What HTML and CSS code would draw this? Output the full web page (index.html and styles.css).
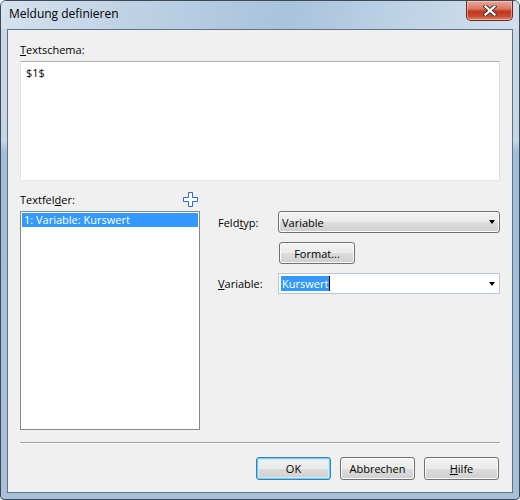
FILE: index.html
```html
<!DOCTYPE html>
<html lang="de">
<head>
  <meta charset="UTF-8" />
  <title>Meldung definieren</title>
  <link rel="stylesheet" href="styles.css">
</head>
<body>
  <div class="window">
    <div class="titlebar">
      <span class="title">Meldung definieren</span>
      <div class="close">
        <svg width="14" height="11" viewBox="0 0 14 11">
          <path d="M2.5 1.5 L11.5 9.5 M11.5 1.5 L2.5 9.5" stroke="#4a3a36" stroke-width="4.2" stroke-linecap="square" />
          <path d="M2.5 1.5 L11.5 9.5 M11.5 1.5 L2.5 9.5" stroke="#fff" stroke-width="2.2" stroke-linecap="square" />
        </svg>
      </div>
    </div>

    <div class="client">
      <div class="label"><u>T</u>extschema:</div>
      <div class="schema">$1$</div>

      <div class="fields">
        <div class="list-head">
          <span>Textfel<u>d</u>er:</span>
          <svg class="plus" width="15" height="15" viewBox="0 0 15 15">
            <path d="M5.5 0.5 H9.5 V5.5 H14.5 V9.5 H9.5 V14.5 H5.5 V9.5 H0.5 V5.5 H5.5 Z" fill="#fff" stroke="#2f66c8" stroke-width="1" />
          </svg>
        </div>
        <div></div>

        <div class="listbox">
          <div class="item selected">1: Variable: Kurswert</div>
        </div>

        <div class="props">
          <div class="row">
            <span class="prop-label">Feld<u>t</u>yp:</span>
            <div class="combo">
              <span>Variable</span>
              <span class="arrow"></span>
            </div>
          </div>
          <div class="row">
            <span class="prop-label"></span>
            <button class="btn format">Format...</button>
          </div>
          <div class="row">
            <span class="prop-label"><u>V</u>ariable:</span>
            <div class="combo edit">
              <span class="sel">Kurswert</span><span class="caret"></span>
              <span class="arrow"></span>
            </div>
          </div>
        </div>
      </div>

      <div class="separator"></div>

      <div class="buttons">
        <button class="btn default">OK</button>
        <button class="btn">Abbrechen</button>
        <button class="btn"><u>H</u>ilfe</button>
      </div>
    </div>
  </div>
</body>
</html>
```

FILE: styles.css
```css
* {
  margin: 0;
  padding: 0;
  box-sizing: border-box;
}

body {
  width: 520px;
  height: 500px;
  font-family: "Open Sans", sans-serif;
  font-size: 11px;
  color: #000;
  background: #fff;
}

.window {
  width: 520px;
  height: 500px;
  border: 1px solid #3d4a56;
  border-radius: 6px 6px 4px 4px;
  background: linear-gradient(180deg, #cbd9e7 0, #c5d6e6 140px, #a3bed8 150px, #a8c0d8 100%);
  display: flex;
  flex-direction: column;
  overflow: hidden;
}

.titlebar {
  height: 28px;
  display: flex;
  align-items: flex-start;
  background: linear-gradient(100deg, #d6e2ee 0%, #bed2e5 25%, #a8c3dc 55%, #c0d4e7 80%, #d0dfed 100%);
}

.title {
  padding: 5px 0 0 8px;
  font-size: 12px;
  line-height: 16px;
  color: #000;
}

.close {
  margin-left: auto;
  margin-right: 6px;
  width: 47px;
  height: 20px;
  border: 1px solid #6b2a1e;
  border-top: none;
  border-radius: 0 0 5px 5px;
  background: linear-gradient(180deg, #e8a899 0%, #db7a66 40%, #c2381f 55%, #c64a30 80%, #e08a70 100%);
  box-shadow: inset 0 0 0 1px rgba(255, 220, 210, 0.5);
  display: flex;
  align-items: center;
  justify-content: center;
}

.client {
  flex: 1;
  margin: 0 6px 6px;
  border: 1px solid #5f7384;
  background: #f0f0f0;
  padding: 12px 12px 0;
}

.label {
  line-height: 15px;
  margin-bottom: 4px;
}

.schema {
  height: 120px;
  background: #fff;
  border: 1px solid #e3e9ef;
  border-top-color: #abadb3;
  border-left-color: #e2e3ea;
  border-right-color: #dbdfe6;
  padding: 3px 5px;
  line-height: 15px;
}

.fields {
  margin-top: 11px;
  display: grid;
  grid-template-columns: 180px 1fr;
  column-gap: 18px;
}

.list-head {
  display: flex;
  justify-content: space-between;
  align-items: center;
  line-height: 15px;
  margin-bottom: 4px;
}

.plus {
  margin-right: 2px;
}

.listbox {
  height: 219px;
  background: #fff;
  border: 1px solid #828790;
  padding: 1px;
}

.item {
  height: 14px;
  line-height: 14px;
  padding-left: 2px;
}

.item.selected {
  background: #3399ff;
  color: #fff;
}

.props {
  display: flex;
  flex-direction: column;
  gap: 9px;
}

.row {
  display: flex;
  align-items: center;
}

.prop-label {
  width: 60px;
}

.combo {
  flex: 1;
  height: 22px;
  border: 1px solid #707070;
  border-radius: 3px;
  background: linear-gradient(180deg, #f2f2f2 0%, #ebebeb 50%, #dddddd 51%, #cfcfcf 100%);
  box-shadow: inset 0 0 0 1px #fbfbfb;
  display: flex;
  align-items: center;
  padding: 0 4px 0 3px;
}

.combo .arrow {
  margin-left: auto;
  width: 0;
  height: 0;
  border-left: 3.5px solid transparent;
  border-right: 3.5px solid transparent;
  border-top: 4px solid #000;
}

.combo.edit {
  height: 21px;
  border-radius: 0;
  border-color: #b9c8d8;
  background: #fff;
  box-shadow: none;
  padding-left: 2px;
}

.sel {
  background: #3399ff;
  color: #fff;
  line-height: 15px;
  padding: 0 1px;
}

.caret {
  width: 1px;
  height: 15px;
  background: #000;
}

.btn {
  font-family: inherit;
  font-size: 11px;
  color: #000;
  height: 22px;
  border: 1px solid #707070;
  border-radius: 3px;
  background: linear-gradient(180deg, #f2f2f2 0%, #ebebeb 50%, #dddddd 51%, #cfcfcf 100%);
  box-shadow: inset 0 0 0 1px #fbfbfb;
}

.btn.format {
  width: 76px;
  margin-left: 1px;
}

.separator {
  margin-top: 12px;
  border-top: 1px solid #a0a0a0;
  border-bottom: 1px solid #fff;
}

.buttons {
  margin-top: 13px;
  display: flex;
  justify-content: flex-end;
  gap: 9px;
  padding-right: 1px;
}

.buttons .btn {
  width: 75px;
  height: 23px;
}

.btn.default {
  border-color: #3c7fb1;
  box-shadow: inset 0 0 0 1px #6fd0f5, inset 0 0 0 2px #c8eefb;
}
```
